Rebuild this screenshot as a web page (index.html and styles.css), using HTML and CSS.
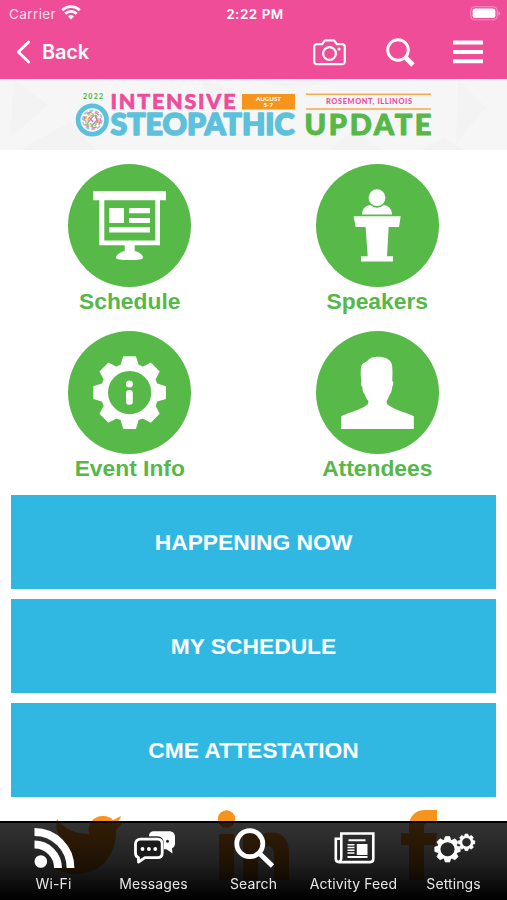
FILE: index.html
```
<!DOCTYPE html>
<html lang="en">
<head>
    <meta charset="UTF-8">
    <meta name="viewport" content="width=device-width, initial-scale=1.0">
    <title>Intensive Osteopathic Update</title>
    <link rel="stylesheet" href="styles.css">
</head>
<body>
    <!-- shared gear shape -->
    <svg class="defs" width="0" height="0">
        <defs>
            <path id="tooth" d="M-9.5-26 L-6.3-36.3 H6.3 L9.5-26Z"/>
            <g id="gear">
                <circle r="25.3" fill="none" stroke="#fff" stroke-width="7.4"/>
                <g fill="#fff">
                    <use href="#tooth"/>
                    <use href="#tooth" transform="rotate(45)"/>
                    <use href="#tooth" transform="rotate(90)"/>
                    <use href="#tooth" transform="rotate(135)"/>
                    <use href="#tooth" transform="rotate(180)"/>
                    <use href="#tooth" transform="rotate(225)"/>
                    <use href="#tooth" transform="rotate(270)"/>
                    <use href="#tooth" transform="rotate(315)"/>
                </g>
            </g>
        </defs>
    </svg>

    <header>
        <div class="status">
            <div class="carrier">
                <span>Carrier</span>
                <svg width="20" height="16" viewBox="0 0 20 16" fill="none" stroke="#fff" stroke-width="2.9">
                    <path d="M1.3 6.2a12.3 12.3 0 0 1 17.4 0M4.3 9.8a8 8 0 0 1 11.4 0"/>
                    <path d="M7 12.4a4.3 4.3 0 0 1 6 0L10 15.4z" fill="#fff" stroke="none"/>
                </svg>
            </div>
            <div class="time">2:22 PM</div>
            <svg class="battery" width="31" height="15" viewBox="0 0 31 15">
                <rect x=".8" y=".8" width="26.4" height="13" rx="4" fill="none" stroke="#fff" stroke-opacity=".4" stroke-width="1.1"/>
                <rect x="2.6" y="2.6" width="22.8" height="9.4" rx="2.2" fill="#fff"/>
                <path d="M28.5 5.2c2 .8 2 3.4 0 4.2z" fill="#fff" fill-opacity=".5"/>
            </svg>
        </div>
        <nav>
            <a class="back">
                <svg width="15" height="24" viewBox="0 0 15 24" fill="none" stroke="#fff" stroke-width="2.8" stroke-linecap="round" stroke-linejoin="round"><path d="M12.6 2 2.4 12l10.2 10"/></svg>
                <span>Back</span>
            </a>
            <svg class="camera" width="33" height="27" viewBox="0 0 33 27" fill="none" stroke="#fff" stroke-width="2.2" stroke-linejoin="round">
                <path d="M3.6 5.2H9l3-3.8h9l3 3.8h5.4a2.4 2.4 0 0 1 2.4 2.4v15.2a2.4 2.4 0 0 1-2.4 2.4H3.6a2.4 2.4 0 0 1-2.4-2.4V7.6a2.4 2.4 0 0 1 2.4-2.4z"/>
                <circle cx="16.5" cy="14.5" r="6.4"/>
                <circle cx="26" cy="10" r="1.6" fill="#fff" stroke="none"/>
            </svg>
            <svg class="search" width="29" height="29" viewBox="0 0 29 29" fill="none" stroke="#fff">
                <circle cx="12" cy="12" r="10.3" stroke-width="2.9"/>
                <path d="m18.5 18.5 2.5 2.5" stroke-width="3"/>
                <path d="m20 20 7 7" stroke-width="4.8"/>
            </svg>
            <svg class="menu" width="30" height="24" viewBox="0 0 30 24"><path d="M0 .5h30v4H0zM0 10h30v4H0zM0 19.2h30v4H0z" fill="#fff"/></svg>
        </nav>
    </header>

    <div class="banner">
        <svg width="507" height="71" viewBox="0 79 507 71">
            <path class="pattern" d="M14 79 48 105 10 138zM458 79l28 28-30 37zM200 79l36 12-20 22zM330 150l22-20 30 20zM20 150l50-28 26 28zM420 150l24-12 20 12zM250 79l44 10 42-10z"/>
            <text class="green" x="83" y="99" font-size="7" textLength="20">2022</text>
            <text class="pink intensive" x="110.500" y="109" font-size="21.5" textLength="125">INTENSIVE</text>
            <rect x="242" y="94" width="53" height="15.5" fill="#f7941e"/>
            <g fill="#fff" font-size="4.6">
                <text x="256" y="100.6" textLength="25" lengthAdjust="spacingAndGlyphs">AUGUST</text>
                <text x="263.5" y="107" textLength="9.5" lengthAdjust="spacingAndGlyphs">5-7</text>
            </g>
            <path d="M306 94.3h125M306 109h125" stroke="#f7a94e" stroke-width="1.4"/>
            <text class="pink" x="326" y="104.3" font-size="7.4" textLength="86">ROSEMONT, ILLINOIS</text>
            <circle cx="92.3" cy="120" r="14.2" fill="#fff" stroke="#5ec1dc" stroke-width="4.8"/>
            <g fill="none" stroke-width="1.5" opacity=".8">
                <circle cx="92.3" cy="120" r="9.6" stroke="#5ec1dc" stroke-dasharray="4 2"/>
                <circle cx="92.3" cy="120" r="8" stroke="#ef4b9b" stroke-dasharray="5 3"/>
                <circle cx="91.8" cy="120" r="6.2" stroke="#8cc63f" stroke-dasharray="3 1"/>
                <circle cx="92.6" cy="120" r="4.5" stroke="#f7941e" stroke-dasharray="4 2"/>
                <path d="m87 124 7-9m-3 12 6-7" stroke="#5aa3e0"/>
                <path d="m89 117 4 5m2-7 3 8" stroke="#ef4b9b"/>
            </g>
            <text class="blue" x="110.5" y="135" font-size="29.5" textLength="184" lengthAdjust="spacingAndGlyphs">STEOPATHIC</text>
            <text class="green big" x="304.5" y="135" font-size="29" textLength="127">UPDATE</text>
        </svg>
    </div>

    <main>
        <div class="tiles">
            <a class="tile">
                <svg viewBox="0 0 123 123" fill="#fff">
                    <circle cx="61.5" cy="61.5" r="61.5" class="disc"/>
                    <path d="M25.3 27H98v9.3h-6v45H66.7V87c5 1 8.3 4.5 8.3 6.5 0 2-5 2.5-13.5 2.5S48 95.5 48 93.5c0-2 3.7-5.5 8.7-6.5v-5.7H31.3v-45h-6z"/>
                    <path class="disc" d="M36.3 36.3h51v40.3h-51z"/>
                    <path d="M41.3 44H56v15H41.3zM61 44h21v5.3H61zM61 54h21v5H61zM41.3 63.3H82v5.3H41.3z"/>
                </svg>
                <span>Schedule</span>
            </a>
            <a class="tile">
                <svg viewBox="0 0 123 123" fill="#fff">
                    <circle cx="61.5" cy="61.5" r="61.5" class="disc"/>
                    <path d="M46 50.6c0-6 4-9.6 9-9.6h12c5 0 9 3.6 9 9.6z"/>
                    <circle cx="61" cy="33.7" r="10" class="disc"/>
                    <circle cx="61" cy="33.7" r="8.4"/>
                    <path d="M37.7 52.3h47L83 63H72.7L71 92.3h6v5.300H45v-5.300h6.700L49.600 63h-10z"/>
                </svg>
                <span>Speakers</span>
            </a>
            <a class="tile">
                <svg viewBox="0 0 123 123">
                    <circle cx="61.5" cy="61.5" r="61.5" class="disc"/>
                    <use href="#gear" x="61.6" y="61.6"/>
                    <circle cx="61.4" cy="53" r="3.5" fill="#fff"/>
                    <rect x="58" y="59" width="6.8" height="14.7" rx="3" fill="#fff"/>
                </svg>
                <span>Event Info</span>
            </a>
            <a class="tile">
                <svg viewBox="0 0 123 123" fill="#fff">
                    <circle cx="61.5" cy="61.5" r="61.5" class="disc"/>
                    <path d="M25 98V85.3c8-4 20-6 27-12.3l.5-3c-2-2-3-4-3.5-6.3-2-1.5-2.5-5-2.6-7.7-1.6-1.5-2-4-.9-6.3C44.5 45 44.5 41 45 36.3c.3-3 3-4.8 6-6 3-4 7-4.6 11-4.6 6 0 13 2 14 8.3.8 5 .4 11 .3 15.7 1.7 1.5 1 4.5-.1 6.3-.1 3-.9 6-2.7 7.7-.6 2.3-1.5 4.3-3 6.3l.5 3c7 6 19 8.3 26.8 12.3V98z"/>
                </svg>
                <span>Attendees</span>
            </a>
        </div>

        <div class="links">
            <a>HAPPENING NOW</a>
            <a>MY SCHEDULE</a>
            <a>CME ATTESTATION</a>
        </div>

        <div class="social">
            <svg class="twitter" width="68" height="62" viewBox="0 0 68 62"><path d="M2 4c7 10 19 15 32 15C32 9 38 1 48 1c4 0 7 1 10 4l8-4c-1 4-3 6-5 8l6-1c-2 3-4 5-6 7 1 24-15 44-39 44-8 0-15-2-22-6 8 0 14-2 20-6-6 0-10-4-12-9h6C7 36 3 31 3 23l6 2C2 20 0 12 2 4z"/></svg>
            <svg class="linkedin" width="71" height="72" viewBox="0 0 71 72"><circle cx="8.5" cy="9" r="8.7"/><path d="M1 24h15v46H1zM25 24h14v6c3-5 8-7.5 14-7.5 13 0 18 8 18 21V70H56V46c0-6-1-10-7-10-7 0-9 4-9 10v24H25z"/></svg>
            <svg class="facebook" width="36" height="72" viewBox="0 0 36 72"><path d="M8 70V35H0V23h8v-6C8 6 14 0 25 0h11v12h-6c-6 0-7 2-7 6v5h13l-2 12H23v35z"/></svg>
        </div>
    </main>

    <footer>
        <a>
            <svg viewBox="0 0 60 44" fill="none" stroke="#fff" stroke-width="7.8">
                <circle cx="16.8" cy="35.5" r="6.3" fill="#fff" stroke="none"/>
                <path d="M10.5 18.5A23.5 23.5 0 0 1 34 42M10.5 6a36 36 0 0 1 36 36"/>
            </svg>
            <span>Wi-Fi</span>
        </a>
        <a>
            <svg viewBox="0 0 60 44">
                <path d="M30 5.3h15c4 0 6 2.2 6 6v6c0 2.5-1 4-3 5l.5 5.3-6-4.3H40v-5c0-5-2-8-7-8h-8c0-3.500 2-5 5-5z" fill="#fff"/>
                <circle cx="43.5" cy="15.2" r="1.5" fill="#222"/>
                <path d="M16.5 13.2h17c3 0 4.7 2 4.7 4.8v9c0 3-2 4.7-4.7 4.700H21L14.500 36v-4.500c-2-.5-3-2.300-3-4.500v-9c0-3 2-4.800 5-4.800z" fill="#1b1b1b" stroke="#fff" stroke-width="2.8" stroke-linejoin="round"/>
                <g fill="#fff"><circle cx="18.5" cy="23" r="1.9"/><circle cx="24.9" cy="23" r="1.9"/><circle cx="31.3" cy="23" r="1.9"/></g>
            </svg>
            <span>Messages</span>
        </a>
        <a>
            <svg viewBox="0 0 60 44" fill="none" stroke="#fff" stroke-width="4.8">
                <circle cx="25.8" cy="17.7" r="13"/>
                <path d="m34.5 26.5 14 13.5"/>
            </svg>
            <span>Search</span>
        </a>
        <a>
            <svg viewBox="0 0 60 44" fill="none" stroke="#fff" stroke-width="2.6">
                <path d="M17.3 7.5h32v25.3c0 2-1 3.300-3 3.300H15.200c-2 0-3.400-1.300-3.400-3.300v-20h5.500zM17.300 12v20c0 1.500-.5 2.500-1.500 3.500"/>
                <path d="M24.5 14.2h17M23.5 30.9h20" stroke-width="2"/>
                <path d="M23.5 18.7h7M23.5 21.5h7M23.5 24.3h7M23.5 27.1h7" stroke-width="1.5"/>
                <path d="M32.8 18h10.7v11H32.8z" fill="#fff" stroke="none"/>
            </svg>
            <span>Activity Feed</span>
        </a>
        <a>
            <svg viewBox="0 0 60 44" fill="none" stroke="#fff">
                <use href="#gear" transform="translate(23.5 23.3) scale(.35)" stroke-width="2"/>
                <circle cx="23.5" cy="23.3" r="8.4" stroke-width="2.6"/>
                <use href="#gear" transform="translate(42.5 16.3) scale(.23)" stroke-width="2"/>
                <circle cx="42.5" cy="16.3" r="5.3" stroke-width="2"/>
            </svg>
            <span>Settings</span>
        </a>
    </footer>
</body>
</html>
```
FILE: styles.css
```
* {
    box-sizing: border-box;
}

body {
    margin: 0;
    height: 900px;
    overflow: hidden;
    background-color: #fff;
    font-family: Inter, "Liberation Sans", sans-serif;
}

svg {
    display: block;
    flex-shrink: 0;
}

.defs {
    position: absolute;
}

header {
    height: 79px;
    background-color: #ef4d98;
    color: #fff;
}

.status {
    display: grid;
    grid-template-columns: 1fr auto 1fr;
    align-items: center;
    height: 27px;
    padding: 0 6px 0 9px;
    font-size: 13.5px;
}

.carrier {
    display: flex;
    align-items: center;
    gap: 5px;
    color: #ffdcec;
    letter-spacing: 0.4px;
}

.carrier svg {
    margin-top: -3px;
}

.time {
    font-weight: 600;
    letter-spacing: 0.5px;
}

.battery {
    justify-self: end;
}

nav {
    display: flex;
    align-items: center;
    height: 50px;
    padding: 0 24px 0 16px;
}

.back {
    display: flex;
    align-items: center;
    gap: 11px;
    margin-right: auto;
    font-size: 20px;
    font-weight: 600;
    letter-spacing: -0.2px;
}

.search {
    margin: 0 38px 0 40px;
}

.banner {
    height: 71px;
    background-color: #f6f6f7;
    font-family: Lato, sans-serif;
    font-weight: 900;
}

.pattern {
    fill: #f3f3f4;
}

.pink {
    fill: #ef4b9b;
}

.intensive {
    stroke: #ef4b9b;
    stroke-width: 0.6px;
}

.green {
    fill: #55b848;
}

.blue {
    fill: #5ec1dc;
    stroke: #5ec1dc;
    stroke-width: 1.6px;
    stroke-linejoin: round;
}

.big {
    stroke: #55b848;
    stroke-width: 1px;
    stroke-linejoin: round;
}

.tiles {
    display: grid;
    grid-template-columns: 247.5px 247.5px;
    margin-left: 6px;
    padding-top: 14px;
}

.tile {
    display: flex;
    flex-direction: column;
    align-items: center;
    height: 167px;
    color: #55b848;
    font: bold 22.8px/28px "Liberation Sans", sans-serif;
}

.tile svg {
    width: 123px;
    height: 123px;
}

.disc {
    fill: #57b947;
}

.links {
    display: flex;
    flex-direction: column;
    gap: 10px;
    margin: -3px 11px 0;
}

.links a {
    display: flex;
    align-items: center;
    justify-content: center;
    height: 94px;
    background-color: #31b8e2;
    color: #fff;
    font: bold 22.8px "Liberation Sans", sans-serif;
}

.social {
    display: flex;
    margin-top: 13px;
    padding-left: 55px;
    fill: #f7941e;
}

.twitter {
    margin-top: 5px;
}

.linkedin {
    margin: 0 112px 0 95px;
}

footer {
    position: fixed;
    left: 0;
    right: 0;
    bottom: 0;
    display: flex;
    height: 79px;
    padding: 3px 3.5px 0;
    border-top: 2px solid #000;
    background: linear-gradient(rgba(0, 0, 0, 0.8), rgba(0, 0, 0, 0.87) 50%, #000);
    color: #e6e6e6;
}

footer a {
    display: flex;
    flex-direction: column;
    align-items: center;
    width: 100px;
    font-size: 14px;
    line-height: 28px;
    letter-spacing: 0.1px;
    white-space: nowrap;
}

footer svg {
    width: 60px;
    height: 44px;
}
```
